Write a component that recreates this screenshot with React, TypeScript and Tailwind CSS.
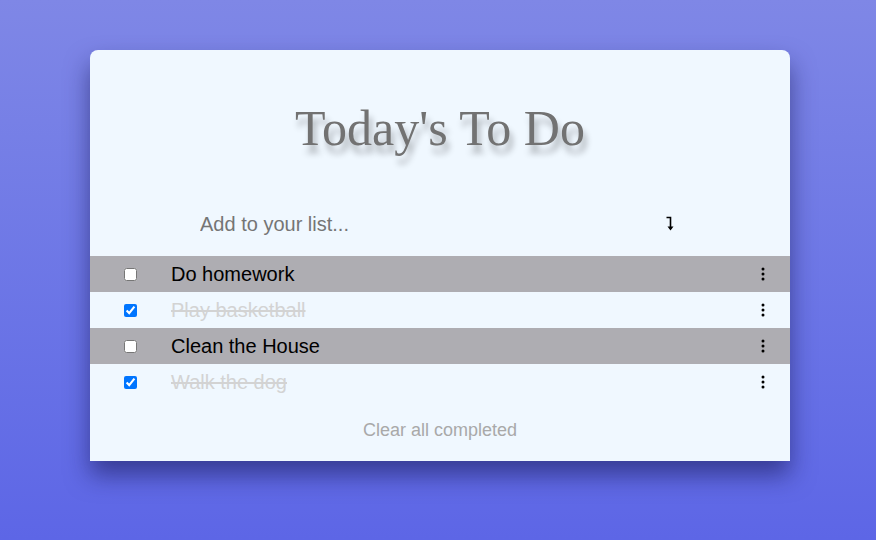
import { useState } from 'react';

interface Todo {
  id: number;
  text: string;
  done: boolean;
}

const initialTodos: Todo[] = [
  { id: 1, text: 'Do homework', done: false },
  { id: 2, text: 'Play basketball', done: true },
  { id: 3, text: 'Clean the House', done: false },
  { id: 4, text: 'Walk the dog', done: true },
];

function MoreDots() {
  return (
    <svg width="4" height="14" viewBox="0 0 4 14" className="block">
      <circle cx="2" cy="2" r="1.5" fill="#000" />
      <circle cx="2" cy="7" r="1.5" fill="#000" />
      <circle cx="2" cy="12" r="1.5" fill="#000" />
    </svg>
  );
}

// corner arrow next to the input
function EnterArrow() {
  return (
    <svg width="10" height="16" viewBox="0 0 10 16" className="block">
      <path d="M1.5 1.5 H5.5 V13" stroke="#000" strokeWidth="1.6" fill="none" />
      <path d="M2.5 10.5 L5.5 14.5 L8.5 10.5 Z" fill="#000" />
    </svg>
  );
}

export default function App() {
  const [todos, setTodos] = useState<Todo[]>(initialTodos);

  const toggle = (id: number) =>
    setTodos((prev) => prev.map((t) => (t.id === id ? { ...t, done: !t.done } : t)));

  return (
    <div className="min-h-screen h-[540px] bg-gradient-to-b from-[#7f87e6] to-[#5d66e6] pt-[50px] font-['Liberation_Sans',Arial,sans-serif]">
      <div className="ml-[90px] w-[700px] bg-[#f0f8ff] rounded-t-lg shadow-[0_14px_24px_rgba(20,20,80,0.55)]">
        {/* Title */}
        <div className="pt-[50px]">
          <h1 className="text-center text-[50px] leading-[57px] text-[#727272] font-['Liberation_Serif','Times_New_Roman',serif] [text-shadow:3px_8px_6px_rgba(0,0,0,0.3)]">
            Today's To Do
          </h1>
        </div>

        {/* Input */}
        <div className="mt-[43px] h-[48px] flex items-center pl-[110px] pr-[115px]">
          <input
            type="text"
            placeholder="Add to your list..."
            className="flex-1 bg-transparent outline-none text-[20px] text-black placeholder:text-[#757575]"
          />
          <EnterArrow />
        </div>

        {/* List */}
        <ul className="mt-2">
          {todos.map((todo, i) => (
            <li
              key={todo.id}
              className={`h-9 flex items-center ${i % 2 === 0 ? 'bg-[#aeadb2]' : ''}`}
            >
              <div className="w-[81px] flex justify-center">
                <input
                  type="checkbox"
                  checked={todo.done}
                  onChange={() => toggle(todo.id)}
                  className="w-[13px] h-[13px] m-0"
                />
              </div>
              <span
                className={`flex-1 text-[20px] ${todo.done ? 'line-through text-[#d3d3d3]' : 'text-black'}`}
              >
                {todo.text}
              </span>
              <div className="w-[54px] flex justify-center pr-[1px]">
                <MoreDots />
              </div>
            </li>
          ))}
        </ul>

        {/* Footer */}
        <div className="h-[61px] flex items-center justify-center">
          <button
            onClick={() => setTodos((prev) => prev.filter((t) => !t.done))}
            className="text-[18px] text-[#a9a9a9]"
          >
            Clear all completed
          </button>
        </div>
      </div>
    </div>
  );
}
